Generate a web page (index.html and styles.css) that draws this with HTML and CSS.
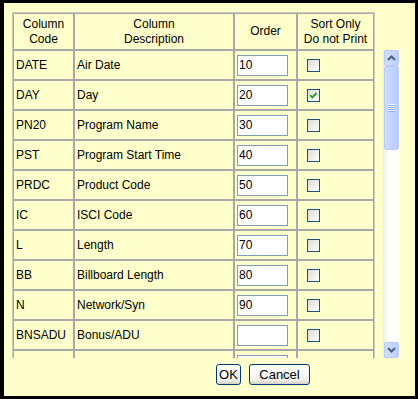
FILE: index.html
```html
<!DOCTYPE html>
<html lang="en">
<head>
  <meta charset="UTF-8">
  <meta name="viewport" content="width=device-width, initial-scale=1.0">
  <title>Column Order</title>
  <link rel="stylesheet" href="styles.css">
</head>
<body>
  <div class="dialog">
    <div class="grid-area">
      <!-- column list, clipped like a scrolling frame -->
      <div class="table-clip">
        <table class="columns">
          <thead>
            <tr>
              <th class="c-code">Column<br>Code</th>
              <th class="c-desc">Column<br>Description</th>
              <th class="c-order">Order</th>
              <th class="c-sort">Sort Only<br>Do not Print</th>
            </tr>
          </thead>
          <tbody>
            <tr>
              <td>DATE</td><td>Air Date</td>
              <td><input class="order-input" type="text" value="10"></td>
              <td class="sort"><span class="chk"></span></td>
            </tr>
            <tr>
              <td>DAY</td><td>Day</td>
              <td><input class="order-input" type="text" value="20"></td>
              <td class="sort"><span class="chk checked"><svg width="11" height="11" viewBox="0 0 11 11"><path d="M2.2 5.2 L4.3 7.3 L8.6 3" fill="none" stroke="#21a121" stroke-width="1.9"/></svg></span></td>
            </tr>
            <tr>
              <td>PN20</td><td>Program Name</td>
              <td><input class="order-input" type="text" value="30"></td>
              <td class="sort"><span class="chk"></span></td>
            </tr>
            <tr>
              <td>PST</td><td>Program Start Time</td>
              <td><input class="order-input" type="text" value="40"></td>
              <td class="sort"><span class="chk"></span></td>
            </tr>
            <tr>
              <td>PRDC</td><td>Product Code</td>
              <td><input class="order-input" type="text" value="50"></td>
              <td class="sort"><span class="chk"></span></td>
            </tr>
            <tr>
              <td>IC</td><td>ISCI Code</td>
              <td><input class="order-input" type="text" value="60"></td>
              <td class="sort"><span class="chk"></span></td>
            </tr>
            <tr>
              <td>L</td><td>Length</td>
              <td><input class="order-input" type="text" value="70"></td>
              <td class="sort"><span class="chk"></span></td>
            </tr>
            <tr>
              <td>BB</td><td>Billboard Length</td>
              <td><input class="order-input" type="text" value="80"></td>
              <td class="sort"><span class="chk"></span></td>
            </tr>
            <tr>
              <td>N</td><td>Network/Syn</td>
              <td><input class="order-input" type="text" value="90"></td>
              <td class="sort"><span class="chk"></span></td>
            </tr>
            <tr>
              <td>BNSADU</td><td>Bonus/ADU</td>
              <td><input class="order-input" type="text" value=""></td>
              <td class="sort"><span class="chk"></span></td>
            </tr>
            <tr>
              <td></td><td></td>
              <td><input class="order-input" type="text" value=""></td>
              <td class="sort"><span class="chk"></span></td>
            </tr>
          </tbody>
        </table>
      </div>

      <!-- scrollbar -->
      <div class="scrollbar">
        <div class="sb-btn"><svg width="9" height="6" viewBox="0 0 9 6"><path d="M1 5 L4.5 1.5 L8 5" fill="none" stroke="#4d6185" stroke-width="2"/></svg></div>
        <div class="sb-thumb"><span class="sb-grip"></span></div>
        <div class="sb-track"></div>
        <div class="sb-btn"><svg width="9" height="6" viewBox="0 0 9 6"><path d="M1 1 L4.5 4.5 L8 1" fill="none" stroke="#4d6185" stroke-width="2"/></svg></div>
      </div>
    </div>

    <div class="actions">
      <button class="btn btn-ok" type="button">OK</button>
      <button class="btn btn-cancel" type="button">Cancel</button>
    </div>
  </div>
</body>
</html>
```

FILE: styles.css
```css
/* page */
body {
  margin: 0;
  font-family: "Liberation Sans", Arial, sans-serif;
  font-size: 12px;
  color: #000;
}

.dialog {
  box-sizing: border-box;
  width: 418px;
  height: 399px;
  border: 3px solid #000;
  border-left-width: 4px;
  background-color: #ffffcc;
  padding: 9px 0 0 8px;
}

.grid-area {
  display: flex;
  align-items: flex-start;
}

/* column table */
.table-clip {
  width: 363px;
  height: 346px;
  overflow: hidden;
}

.columns {
  box-sizing: border-box;
  width: 363px;
  table-layout: fixed;
  border-collapse: separate;
  border-spacing: 0;
  border: 1px solid #c8c8b8;
}

.columns th,
.columns td {
  box-sizing: border-box;
  border: 1px solid #a8a8a8;
  padding: 0 2px;
  font-weight: normal;
  vertical-align: middle;
}

.columns th {
  height: 37px;
  line-height: 15px;
  text-align: center;
}

.columns td {
  height: 30px;
  white-space: nowrap;
}

.c-code { width: 61px; }
.c-desc { width: 160px; }
.c-order { width: 63px; }
.c-sort { width: 77px; }

.columns td.sort {
  padding-left: 9px;
}

.order-input {
  display: block;
  box-sizing: border-box;
  width: 51px;
  height: 21px;
  margin: 0;
  border: 1px solid #7f9db9;
  padding: 0 1px;
  background: #fff;
  font-family: "Liberation Sans", Arial, sans-serif;
  font-size: 12px;
  color: #000;
}

/* checkbox */
.chk {
  display: block;
  box-sizing: border-box;
  width: 13px;
  height: 13px;
  border: 1px solid #1c5180;
  background: linear-gradient(135deg, #dcdcd7 0%, #f4f4f1 70%, #ffffff 100%);
}

.chk svg {
  display: block;
}

/* scrollbar */
.scrollbar {
  box-sizing: border-box;
  width: 17px;
  height: 308px;
  margin: 38px 0 0 8px;
  padding: 0 1px;
  display: flex;
  flex-direction: column;
  background: linear-gradient(to right, #eeede5, #fefefb 35%, #fefefb);
}

.sb-btn {
  box-sizing: border-box;
  height: 16px;
  border: 1px solid #b9ccf6;
  border-radius: 2px;
  background: linear-gradient(to right, #d2defc, #bccffb);
  display: flex;
  align-items: center;
  justify-content: center;
}

.sb-thumb {
  box-sizing: border-box;
  height: 84px;
  border: 1px solid #b9ccf6;
  border-radius: 2px;
  background: linear-gradient(to right, #cbdafd, #b9cefb);
  display: flex;
  align-items: center;
  justify-content: center;
}

.sb-grip {
  width: 7px;
  height: 8px;
  background: repeating-linear-gradient(#eef4fe 0 1px, #8cb0f8 1px 2px);
}

.sb-track {
  flex: 1;
}

/* buttons */
.actions {
  display: flex;
  gap: 8px;
  margin-top: 6px;
  padding-left: 204px;
}

.btn {
  box-sizing: border-box;
  height: 21px;
  padding: 0;
  border: 1px solid #003c74;
  border-radius: 3px;
  background: linear-gradient(#ffffff, #f3f3ee 75%, #d6d0c5);
  font-family: "Liberation Sans", Arial, sans-serif;
  font-size: 13px;
  color: #000;
}

.btn-ok { width: 25px; }
.btn-cancel { width: 61px; }
```
